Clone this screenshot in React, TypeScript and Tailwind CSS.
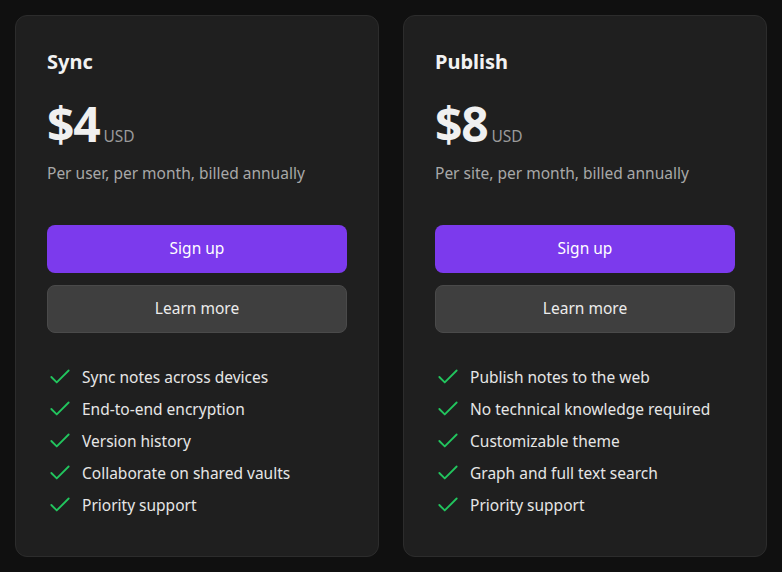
import { Check } from "lucide-react";

const plans = [
  {
    name: "Sync",
    price: "$4",
    note: "Per user, per month, billed annually",
    features: [
      "Sync notes across devices",
      "End-to-end encryption",
      "Version history",
      "Collaborate on shared vaults",
      "Priority support",
    ],
  },
  {
    name: "Publish",
    price: "$8",
    note: "Per site, per month, billed annually",
    features: [
      "Publish notes to the web",
      "No technical knowledge required",
      "Customizable theme",
      "Graph and full text search",
      "Priority support",
    ],
  },
];

export default function App() {
  return (
    <div
      className="min-h-screen w-full bg-[#101010] p-[15px]"
      style={{ fontFamily: '"Noto Sans", "Open Sans", sans-serif' }}
    >
      <div className="grid grid-cols-2 gap-6">
        {plans.map((plan) => (
          <div
            key={plan.name}
            className="flex h-[542px] flex-col rounded-xl border border-[#2c2c2c] bg-[#1f1f1f] px-[31px] pt-8"
          >
            <h2 className="text-xl leading-7 font-bold text-[#f2f2f2]">{plan.name}</h2>
            <div className="mt-5 flex items-baseline gap-1">
              <span className="text-5xl leading-[56px] font-bold tracking-tight text-[#f0f0f0]">
                {plan.price}
              </span>
              <span className="text-[15.5px] text-[#9a9a9a]">USD</span>
            </div>
            <p className="mt-[9px] text-[15.5px] leading-6 text-[#a8a8a8]">{plan.note}</p>
            <div className="mt-10 flex flex-col gap-3">
              <button className="h-12 rounded-lg bg-[#7c3aed] text-[15.5px] text-white">
                Sign up
              </button>
              <button className="h-12 rounded-lg border border-[#4a4a4a] bg-[#3f3f3f] text-[15.5px] text-[#ececec]">
                Learn more
              </button>
            </div>
            <ul className="mt-[31px] flex flex-col gap-1.5">
              {plan.features.map((f) => (
                <li key={f} className="flex items-center gap-[9px] text-[15.5px] leading-6 text-[#e6e6e6]">
                  <Check className="size-[26px] text-[#22c55e]" strokeWidth={1.7} />
                  {f}
                </li>
              ))}
            </ul>
          </div>
        ))}
      </div>
    </div>
  );
}
